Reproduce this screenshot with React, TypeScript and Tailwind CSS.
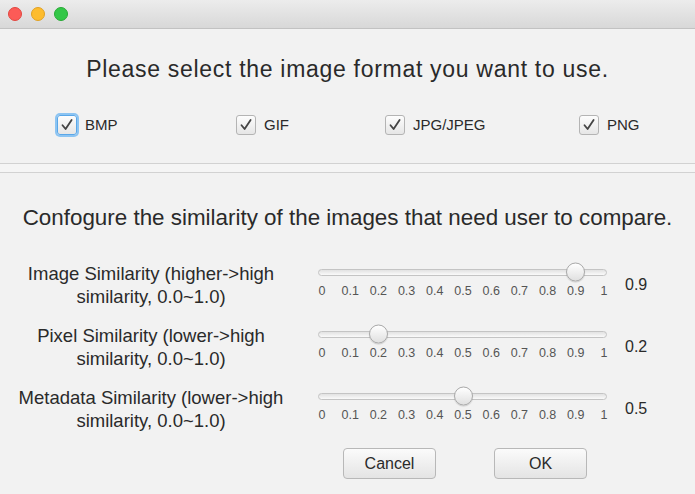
import React from "react";

const TICKS = ["0", "0.1", "0.2", "0.3", "0.4", "0.5", "0.6", "0.7", "0.8", "0.9", "1"];

const ROWS = [
    { label: ["Image Similarity (higher->high", "similarity, 0.0~1.0)"], value: 0.9 },
    { label: ["Pixel Similarity (lower->high", "similarity, 0.0~1.0)"], value: 0.2 },
    { label: ["Metadata Similarity (lower->high", "similarity, 0.0~1.0)"], value: 0.5 },
];

const FORMATS = [
    { name: "BMP", focused: true },
    { name: "GIF" },
    { name: "JPG/JPEG" },
    { name: "PNG" },
];

function Check({ focused }: { focused?: boolean }) {
    return (
        <span
            className={
                "flex items-center justify-center w-[20px] h-[20px] rounded-[3px] border bg-gradient-to-b from-[#fdfdfd] to-[#e6e6e6] " +
                (focused ? "border-[#5aa7e8] ring-2 ring-[#8cc4f2]" : "border-[#b4b4b4]")
            }
        >
            <svg width="14" height="14" viewBox="0 0 14 14" fill="none">
                <path d="M2.5 7.2 L5.6 11 L11.6 2" stroke="#444" strokeWidth="1.8" strokeLinecap="round" strokeLinejoin="round" />
            </svg>
        </span>
    );
}

function Slider({ value }: { value: number }) {
    return (
        <div className="w-[289px]">
            {/* track + thumb */}
            <div className="relative h-[22px] flex items-center">
                <div className="w-full h-[7px] rounded-full border border-[#c4c4c4] bg-gradient-to-b from-[#e2e2e2] to-[#fafafa]" />
                <div
                    className="absolute top-1/2 -translate-y-1/2 w-[19px] h-[19px] -ml-[9.5px] rounded-full border border-[#a9a9a9] bg-gradient-to-b from-[#ffffff] to-[#e0e0e0] shadow-[0_1px_1px_rgba(0,0,0,0.15)]"
                    style={{ left: `${4 + value * 282}px` }}
                />
            </div>
            <div className="relative h-[16px] text-[12.5px] leading-[16px] text-[#555]">
                {TICKS.map((t, i) => (
                    <span
                        key={t}
                        className="absolute top-0 -translate-x-1/2"
                        style={{ left: `${4 + i * 28.2}px` }}
                    >
                        {t}
                    </span>
                ))}
            </div>
        </div>
    );
}

export default function App() {
    return (
        <div className="w-[695px] h-[494px] overflow-hidden bg-[#f2f2f2] text-[#2a2a2a] font-['Liberation_Sans',Arial,sans-serif]">
            {/* Title bar */}
            <div className="h-[29px] flex items-center gap-[9px] pl-[8px] border-b border-[#c2c2c2] bg-gradient-to-b from-[#ececec] to-[#d8d8d8]">
                <span className="w-[14px] h-[14px] rounded-full bg-[#fc5b57] border border-[#e2463f]" />
                <span className="w-[14px] h-[14px] rounded-full bg-[#fdbc2e] border border-[#e1a123]" />
                <span className="w-[14px] h-[14px] rounded-full bg-[#33c748] border border-[#27aa35]" />
            </div>

            {/* Format section */}
            <div className="pt-[27px] text-center text-[23px] tracking-[0.7px] leading-[26px]">
                Please select the image format you want to use.
            </div>
            <div className="mt-[27px] grid grid-cols-[179px_149px_194px_auto] pl-[57px] h-[32px] items-center text-[15px]">
                {FORMATS.map((f) => (
                    <label key={f.name} className="flex items-center gap-[8px]">
                        <Check focused={f.focused} />
                        <span>{f.name}</span>
                    </label>
                ))}
            </div>

            {/* Split divider */}
            <div className="mt-[22px] h-[10px] border-t border-b border-[#d2d2d2] bg-[#f5f5f5]" />

            {/* Similarity section */}
            <div className="mt-[32px] text-center text-[22.4px] leading-[26px]">
                Confogure the similarity of the images that need user to compare.
            </div>

            <div className="mt-[31px] flex flex-col gap-[16px]">
                {ROWS.map((r) => (
                    <div key={r.label[0]} className="flex items-start">
                        <div className="w-[302px] text-center text-[18.5px] leading-[23px]">
                            <div>{r.label[0]}</div>
                            <div>{r.label[1]}</div>
                        </div>
                        <div className="ml-[16px] -mt-[1px]">
                            <Slider value={r.value} />
                        </div>
                        <div className="ml-[18px] mt-[11px] text-[16px]">{r.value.toFixed(1)}</div>
                    </div>
                ))}
            </div>

            {/* Buttons */}
            <div className="mt-[16px] flex pl-[343px] gap-[58px] text-[16px]">
                <button className="w-[93px] h-[31px] rounded-[4px] border border-[#b8b8b8] bg-gradient-to-b from-[#fbfbfb] to-[#e4e4e4]">
                    Cancel
                </button>
                <button className="w-[93px] h-[31px] rounded-[4px] border border-[#b8b8b8] bg-gradient-to-b from-[#fbfbfb] to-[#e4e4e4]">
                    OK
                </button>
            </div>
        </div>
    );
}
